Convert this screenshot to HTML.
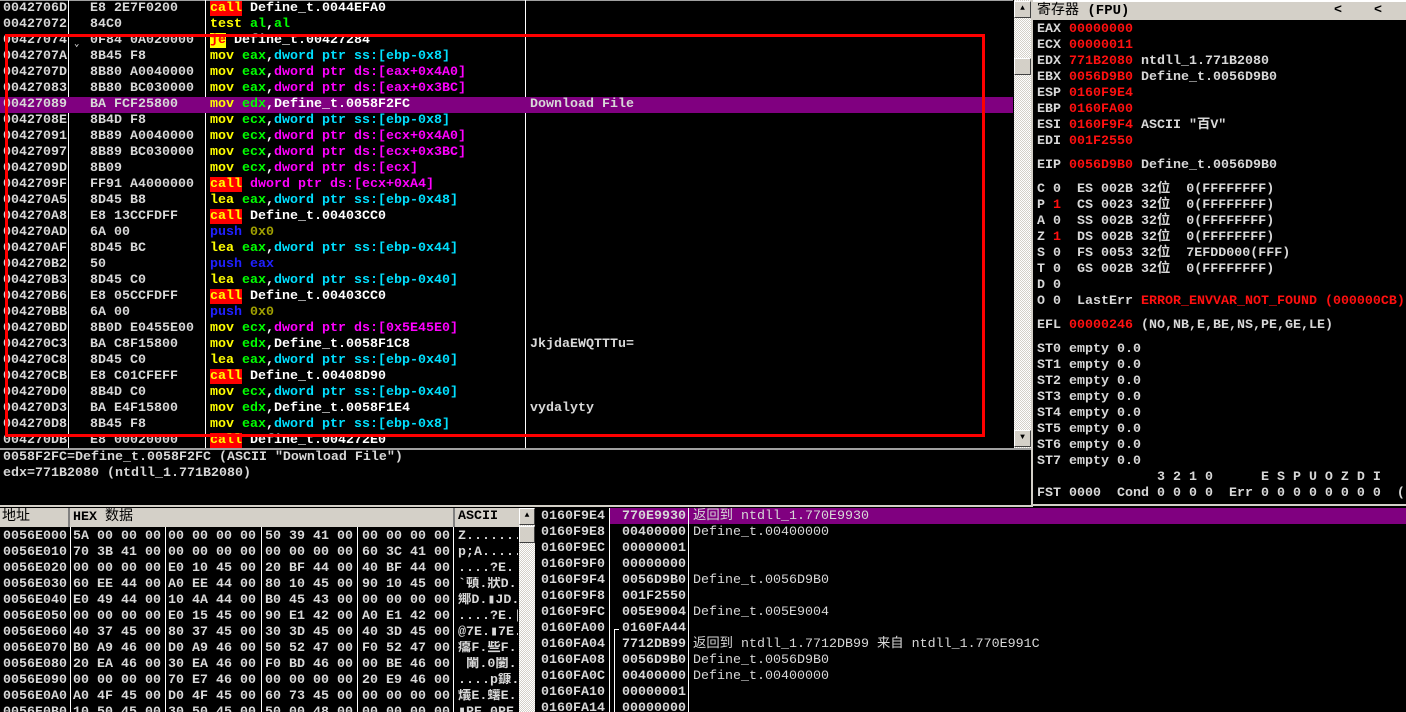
<!DOCTYPE html>
<html style="overflow:hidden;width:1406px;height:712px"><head><meta charset="utf-8"><style>
*{margin:0;padding:0;box-sizing:border-box}
body{width:1406px;height:712px;background:#000;position:relative;overflow:hidden;font-family:"Liberation Mono","Noto Sans CJK SC",monospace;font-size:13.33px;font-weight:bold;color:#d8d8d8}
.a{position:absolute;white-space:pre;line-height:16px;height:16px}
.vl{position:absolute;width:1px;background:#fff}
.y{color:#ffff00}.g{color:#00ff00}.c{color:#00e0ff}.m{color:#ff00ff}.b{color:#2020ff}.o{color:#a0a000}.r{color:#ff1010}.w{color:#fff}
.call{background:#ff0000;color:#ffff00}
.je{background:#ffff00;color:#ff0000}
.gray{background:#d4d0c8;color:#000}
.sb{position:absolute;background:repeating-conic-gradient(#fff 0 25%,#d4d0c8 0 50%) 0 0/2px 2px}
.btn{position:absolute;background:#d4d0c8;border:1px solid;border-color:#fff #404040 #404040 #fff}
#clip{position:absolute;left:0;top:0;width:1406px;height:712px;overflow:hidden}
</style></head><body><div id="clip">
<div style="position:absolute;left:0;top:0;width:1013px;height:1px;background:#a0a0a0"></div>
<div class="vl" style="left:68px;top:0;height:448px"></div>
<div class="vl" style="left:205px;top:0;height:448px"></div>
<div class="vl" style="left:525px;top:0;height:448px"></div>
<div style="position:absolute;left:0;top:97px;width:1013px;height:16px;background:#800080"></div>
<div id="dis"></div>
<div style="position:absolute;left:5px;top:34px;width:980px;height:403px;border:3px solid #ff0000"></div>
<div class="sb" style="left:1014px;top:0;width:17px;height:448px"></div>
<div class="btn" style="left:1014px;top:1px;width:17px;height:17px;font-size:8px;text-align:center;line-height:14px;color:#000">▲</div>
<div class="btn" style="left:1014px;top:58px;width:17px;height:17px"></div>
<div class="btn" style="left:1014px;top:430px;width:17px;height:17px;font-size:8px;text-align:center;line-height:14px;color:#000">▼</div>
<div style="position:absolute;left:0;top:448px;width:1032px;height:2px;background:#a0a0a0"></div>
<div class="a" style="left:3px;top:450px">0058F2FC=Define_t.0058F2FC (ASCII "Download File")</div>
<div class="a" style="left:3px;top:466px">edx=771B2080 (ntdll_1.771B2080)</div>
<div style="position:absolute;left:0;top:505px;width:1032px;height:2px;background:#d4d0c8"></div>
<div style="position:absolute;left:1031px;top:0;width:2px;height:507px;background:#d4d0c8"></div>
<div style="position:absolute;left:1033px;top:0;width:373px;height:2px;background:#fff"></div>
<div class="gray" style="position:absolute;left:1033px;top:2px;width:373px;height:18px"></div>
<div class="a" style="left:1037px;top:3px;color:#000;font-weight:normal;font-size:14px">寄存器 <b>(FPU)</b></div>
<div class="a" style="left:1334px;top:3px;color:#000">&lt;</div>
<div class="a" style="left:1374px;top:3px;color:#000">&lt;</div>
<div id="reg"></div>
<div style="position:absolute;left:1033px;top:504px;width:373px;height:2px;background:#d4d0c8"></div>
<div class="gray" style="position:absolute;left:0;top:508px;width:519px;height:19px"></div>
<div class="a" style="left:2px;top:509px;color:#000;font-weight:normal;font-size:14px">地址</div>
<div class="a" style="left:73px;top:509px;color:#000">HEX <span style="font-weight:normal;font-size:14px">数据</span></div>
<div class="a" style="left:458px;top:509px;color:#000">ASCII</div>
<div style="position:absolute;left:68px;top:508px;width:2px;height:19px;background:#808080"></div>
<div style="position:absolute;left:453px;top:508px;width:2px;height:19px;background:#808080"></div>
<div class="vl" style="left:70px;top:527px;height:185px"></div>
<div class="vl" style="left:165px;top:527px;height:185px"></div>
<div class="vl" style="left:261px;top:527px;height:185px"></div>
<div class="vl" style="left:357px;top:527px;height:185px"></div>
<div class="vl" style="left:453px;top:527px;height:185px"></div>
<div id="dump"></div>
<div class="sb" style="left:519px;top:508px;width:16px;height:204px"></div>
<div class="btn" style="left:519px;top:508px;width:16px;height:17px;font-size:8px;text-align:center;line-height:14px;color:#000">▲</div>
<div class="btn" style="left:519px;top:526px;width:16px;height:17px"></div>
<div style="position:absolute;left:609px;top:508px;width:797px;height:16px;background:#800080"></div>
<div class="vl" style="left:609px;top:508px;height:204px"></div>
<div class="vl" style="left:688px;top:508px;height:204px"></div>
<div style="position:absolute;left:614px;top:629px;width:1px;height:83px;background:#fff"></div>
<div style="position:absolute;left:614px;top:629px;width:5px;height:1px;background:#fff"></div>
<div id="stk"></div>
</div>
<script>
function row(par,x,y,h){const d=document.createElement('div');d.className='a';d.style.left=x+'px';d.style.top=y+'px';d.innerHTML=h;document.getElementById(par).appendChild(d)}
const Y=s=>'<span class="y">'+s+'</span>',G=s=>'<span class="g">'+s+'</span>',C=s=>'<span class="c">'+s+'</span>',M=s=>'<span class="m">'+s+'</span>',W=s=>'<span class="w">'+s+'</span>';
const CALL='<span class="call">call</span> ';
const dis=[
['0042706D','E8 2E7F0200',CALL+W('Define_t.0044EFA0'),''],
['00427072','84C0',Y('test ')+G('al')+W(',')+G('al'),''],
['00427074','0F84 0A020000','<span class="je">je</span> '+W('Define_t.00427284'),''],
['0042707A','8B45 F8',Y('mov ')+G('eax')+W(',')+C('dword ptr ss:[ebp-0x8]'),''],
['0042707D','8B80 A0040000',Y('mov ')+G('eax')+W(',')+M('dword ptr ds:[eax+0x4A0]'),''],
['00427083','8B80 BC030000',Y('mov ')+G('eax')+W(',')+M('dword ptr ds:[eax+0x3BC]'),''],
['00427089','BA FCF25800',Y('mov ')+G('edx')+W(',Define_t.0058F2FC'),'Download File'],
['0042708E','8B4D F8',Y('mov ')+G('ecx')+W(',')+C('dword ptr ss:[ebp-0x8]'),''],
['00427091','8B89 A0040000',Y('mov ')+G('ecx')+W(',')+M('dword ptr ds:[ecx+0x4A0]'),''],
['00427097','8B89 BC030000',Y('mov ')+G('ecx')+W(',')+M('dword ptr ds:[ecx+0x3BC]'),''],
['0042709D','8B09',Y('mov ')+G('ecx')+W(',')+M('dword ptr ds:[ecx]'),''],
['0042709F','FF91 A4000000',CALL+M('dword ptr ds:[ecx+0xA4]'),''],
['004270A5','8D45 B8',Y('lea ')+G('eax')+W(',')+C('dword ptr ss:[ebp-0x48]'),''],
['004270A8','E8 13CCFDFF',CALL+W('Define_t.00403CC0'),''],
['004270AD','6A 00','<span class="b">push </span><span class="o">0x0</span>',''],
['004270AF','8D45 BC',Y('lea ')+G('eax')+W(',')+C('dword ptr ss:[ebp-0x44]'),''],
['004270B2','50','<span class="b">push eax</span>',''],
['004270B3','8D45 C0',Y('lea ')+G('eax')+W(',')+C('dword ptr ss:[ebp-0x40]'),''],
['004270B6','E8 05CCFDFF',CALL+W('Define_t.00403CC0'),''],
['004270BB','6A 00','<span class="b">push </span><span class="o">0x0</span>',''],
['004270BD','8B0D E0455E00',Y('mov ')+G('ecx')+W(',')+M('dword ptr ds:[0x5E45E0]'),''],
['004270C3','BA C8F15800',Y('mov ')+G('edx')+W(',Define_t.0058F1C8'),'JkjdaEWQTTTu='],
['004270C8','8D45 C0',Y('lea ')+G('eax')+W(',')+C('dword ptr ss:[ebp-0x40]'),''],
['004270CB','E8 C01CFEFF',CALL+W('Define_t.00408D90'),''],
['004270D0','8B4D C0',Y('mov ')+G('ecx')+W(',')+C('dword ptr ss:[ebp-0x40]'),''],
['004270D3','BA E4F15800',Y('mov ')+G('edx')+W(',Define_t.0058F1E4'),'vydalyty'],
['004270D8','8B45 F8',Y('mov ')+G('eax')+W(',')+C('dword ptr ss:[ebp-0x8]'),''],
['004270DB','E8 00020000',CALL+W('Define_t.004272E0'),'']];
dis.forEach((d,i)=>{const t=1+i*16;row('dis',3,t,d[0]);row('dis',90,t,d[1]);row('dis',210,t,d[2]);if(d[3])row('dis',530,t,d[3]);});
row('dis',74,36,'<span style="font-size:9px">⌄</span>');
const R=s=>'<span class="r">'+s+'</span>';
const reg=[[20,'EAX '+R('00000000')],[36,'ECX '+R('00000011')],[52,'EDX '+R('771B2080')+' ntdll_1.771B2080'],[68,'EBX '+R('0056D9B0')+' Define_t.0056D9B0'],[84,'ESP '+R('0160F9E4')],[100,'EBP '+R('0160FA00')],[116,'ESI '+R('0160F9F4')+' ASCII "百V"'],[132,'EDI '+R('001F2550')],[156,'EIP '+R('0056D9B0')+' Define_t.0056D9B0'],
[180,'C 0  ES 002B 32位  0(FFFFFFFF)'],[196,'P '+R('1')+'  CS 0023 32位  0(FFFFFFFF)'],[212,'A 0  SS 002B 32位  0(FFFFFFFF)'],[228,'Z '+R('1')+'  DS 002B 32位  0(FFFFFFFF)'],[244,'S 0  FS 0053 32位  7EFDD000(FFF)'],[260,'T 0  GS 002B 32位  0(FFFFFFFF)'],[276,'D 0'],[292,'O 0  LastErr '+R('ERROR_ENVVAR_NOT_FOUND (000000CB)')],[316,'EFL '+R('00000246')+' (NO,NB,E,BE,NS,PE,GE,LE)'],
[340,'ST0 empty 0.0'],[356,'ST1 empty 0.0'],[372,'ST2 empty 0.0'],[388,'ST3 empty 0.0'],[404,'ST4 empty 0.0'],[420,'ST5 empty 0.0'],[436,'ST6 empty 0.0'],[452,'ST7 empty 0.0'],[468,'               3 2 1 0      E S P U O Z D I'],[484,'FST 0000  Cond 0 0 0 0  Err 0 0 0 0 0 0 0 0  (']];
reg.forEach(r=>row('reg',1037,r[0]+2,r[1]));
const dump=[['0056E000','5A 00 00 00','00 00 00 00','50 39 41 00','00 00 00 00','Z.......'],
['0056E010','70 3B 41 00','00 00 00 00','00 00 00 00','60 3C 41 00','p;A.....'],
['0056E020','00 00 00 00','E0 10 45 00','20 BF 44 00','40 BF 44 00','....?E. '],
['0056E030','60 EE 44 00','A0 EE 44 00','80 10 45 00','90 10 45 00','`頓.狀D.'],
['0056E040','E0 49 44 00','10 4A 44 00','B0 45 43 00','00 00 00 00','鄊D.▮JD.'],
['0056E050','00 00 00 00','E0 15 45 00','90 E1 42 00','A0 E1 42 00','....?E.|'],
['0056E060','40 37 45 00','80 37 45 00','30 3D 45 00','40 3D 45 00','@7E.▮7E.'],
['0056E070','B0 A9 46 00','D0 A9 46 00','50 52 47 00','F0 52 47 00','癟F.些F.'],
['0056E080','20 EA 46 00','30 EA 46 00','F0 BD 46 00','00 BE 46 00',' 閳.0闄.'],
['0056E090','00 00 00 00','70 E7 46 00','00 00 00 00','20 E9 46 00','....p鏮.'],
['0056E0A0','A0 4F 45 00','D0 4F 45 00','60 73 45 00','00 00 00 00','燨E.蠴E.'],
['0056E0B0','10 50 45 00','30 50 45 00','50 00 48 00','00 00 00 00','▮PE.0PE.']];
dump.forEach((d,i)=>{const t=529+i*16;row('dump',3,t,d[0]);row('dump',73,t,d[1]);row('dump',168,t,d[2]);row('dump',265,t,d[3]);row('dump',362,t,d[4]);row('dump',458,t,'<span style="display:inline-block;width:60px;overflow:hidden">'+d[5]+'</span>');});
const stk=[['0160F9E4','770E9930','返回到 ntdll_1.770E9930'],['0160F9E8','00400000','Define_t.00400000'],['0160F9EC','00000001',''],['0160F9F0','00000000',''],['0160F9F4','0056D9B0','Define_t.0056D9B0'],['0160F9F8','001F2550',''],['0160F9FC','005E9004','Define_t.005E9004'],['0160FA00','0160FA44',''],['0160FA04','7712DB99','返回到 ntdll_1.7712DB99 来自 ntdll_1.770E991C'],['0160FA08','0056D9B0','Define_t.0056D9B0'],['0160FA0C','00400000','Define_t.00400000'],['0160FA10','00000001',''],['0160FA14','00000000','']];
stk.forEach((s,i)=>{const t=509+i*16;row('stk',541,t,s[0]);row('stk',622,t,s[1]);if(s[2])row('stk',693,t,'<span style="font-weight:normal">'+s[2]+'</span>');});
</script>
</body></html>
